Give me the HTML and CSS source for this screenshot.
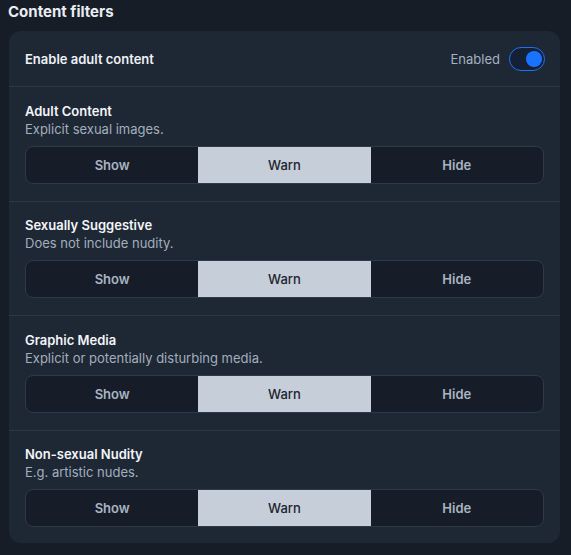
FILE: index.html
```html
<!DOCTYPE html>
<html>
<head>
<meta charset="utf-8">
<link rel="stylesheet" href="styles.css">
</head>
<body>
<h2 class="heading">Content filters</h2>
<div class="card">
  <div class="row-main">
    <span class="main-label">Enable adult content</span>
    <div class="toggle-wrap">
      <span class="toggle-label">Enabled</span>
      <span class="toggle"><span class="knob"></span></span>
    </div>
  </div>
  <div class="section">
    <div class="s-title">Adult Content</div>
    <div class="s-desc">Explicit sexual images.</div>
    <div class="seg">
      <div class="opt">Show</div>
      <div class="opt active">Warn</div>
      <div class="opt">Hide</div>
    </div>
  </div>
  <div class="section">
    <div class="s-title">Sexually Suggestive</div>
    <div class="s-desc">Does not include nudity.</div>
    <div class="seg">
      <div class="opt">Show</div>
      <div class="opt active">Warn</div>
      <div class="opt">Hide</div>
    </div>
  </div>
  <div class="section">
    <div class="s-title">Graphic Media</div>
    <div class="s-desc">Explicit or potentially disturbing media.</div>
    <div class="seg">
      <div class="opt">Show</div>
      <div class="opt active">Warn</div>
      <div class="opt">Hide</div>
    </div>
  </div>
  <div class="section last">
    <div class="s-title">Non-sexual Nudity</div>
    <div class="s-desc">E.g. artistic nudes.</div>
    <div class="seg">
      <div class="opt">Show</div>
      <div class="opt active">Warn</div>
      <div class="opt">Hide</div>
    </div>
  </div>
</div>
</body>
</html>
```
FILE: styles.css
```css
html, body {
  margin: 0;
  background: #161d27;
}
body {
  font-family: Inter, "Noto Sans", sans-serif;
  padding: 0 11px 0 9px;
  color: #f1f3f6;
}
.heading {
  margin: 0 0 0 -1px;
  font-size: 15px;
  font-weight: 700;
  line-height: 24px;
  height: 24px;
  color: #e9edf2;
}
.card {
  margin-top: 7px;
  background: #1e2835;
  border-radius: 12px;
}
.row-main {
  height: 55px;
  display: flex;
  align-items: center;
  justify-content: space-between;
  padding: 0 15px 0 16px;
  border-bottom: 1px solid #2c3848;
}
.main-label {
  font-size: 13px;
  font-weight: 600;
  color: #eef1f5;
}
.toggle-wrap {
  display: flex;
  align-items: center;
  gap: 9px;
}
.toggle-label {
  font-size: 13px;
  color: #a6b1c0;
}
.toggle {
  box-sizing: border-box;
  width: 36px;
  height: 24px;
  border: 1.5px solid #1d72f5;
  border-radius: 12px;
  background: #142036;
  display: flex;
  align-items: center;
  justify-content: flex-end;
  padding-right: 2.5px;
}
.knob {
  width: 16px;
  height: 16px;
  border-radius: 50%;
  background: #1a73ff;
}
.section {
  padding: 14.5px 16px 17px;
  border-bottom: 1px solid #2c3848;
}
.section.last {
  border-bottom: none;
  padding-bottom: 16px;
}
.s-title {
  font-size: 13px;
  font-weight: 600;
  line-height: 18px;
  color: #f3f5f8;
}
.s-desc {
  font-size: 13px;
  line-height: 18px;
  color: #a3aebd;
}
.seg {
  margin-top: 8px;
  display: grid;
  grid-template-columns: 1fr 1fr 1fr;
  height: 38px;
  box-sizing: border-box;
  border: 1px solid #2d3a4b;
  border-radius: 8px;
  overflow: hidden;
  background: #171d28;
}
.opt {
  display: flex;
  align-items: center;
  justify-content: center;
  font-size: 13px;
  font-weight: 600;
  color: #a9b4c2;
}
.opt.active {
  background: #c5ced9;
  color: #1d2430;
  font-weight: 500;
}
```
